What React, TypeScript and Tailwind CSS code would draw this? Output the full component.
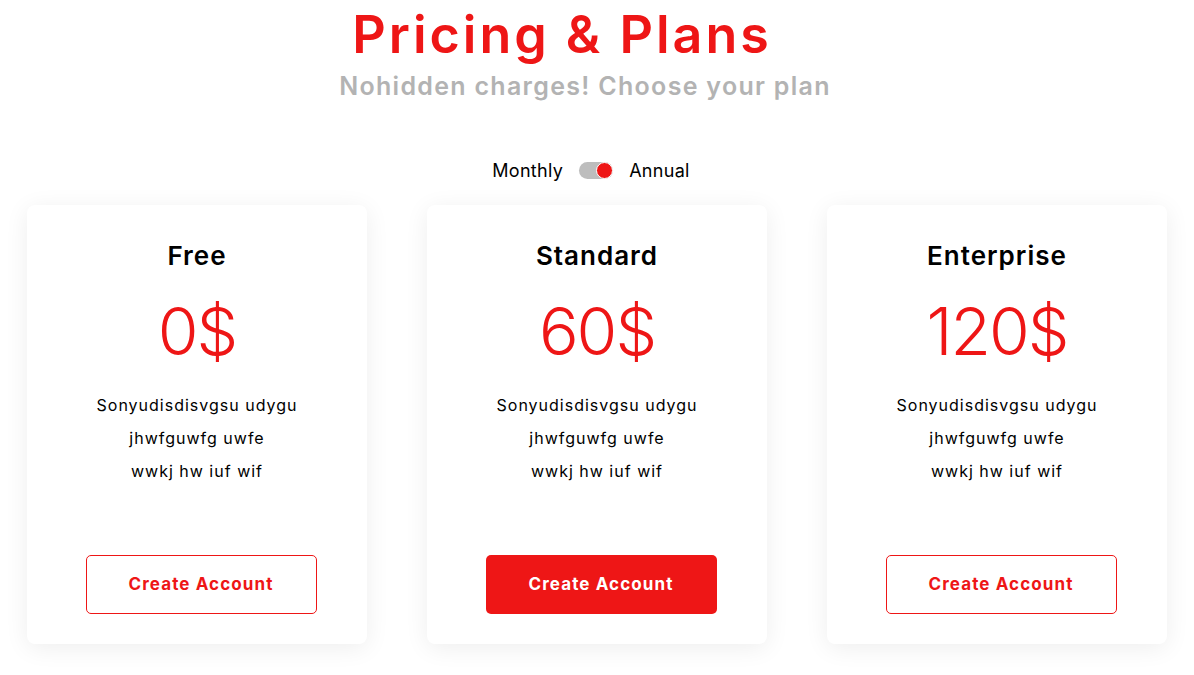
import React from "react";

const plans = [
  { name: "Free", price: "0$", filled: false },
  { name: "Standard", price: "60$", filled: true },
  { name: "Enterprise", price: "120$", filled: false },
];

function Card({ name, price, filled }: { name: string; price: string; filled: boolean }) {
  return (
    <div className="w-[340px] h-[439px] bg-white rounded-[8px] shadow-[0_4px_24px_rgba(0,0,0,0.07)] flex flex-col items-center pt-[35px] pb-[30px]">
      <div className="text-[26px] leading-[32px] font-semibold text-black tracking-[1px]">{name}</div>
      <div className="mt-[19px] text-[66px] leading-[80px] font-light text-[#ee1616] tracking-[-2px]">{price}</div>
      <div className="mt-[18px] flex flex-col items-center text-[16px] leading-[33px] text-black tracking-[1px]">
        <span>Sonyudisdisvgsu udygu</span>
        <span>jhwfguwfg uwfe</span>
        <span>wwkj hw iuf wif</span>
      </div>
      <button
        className={
          filled
            ? "mt-auto ml-[8px] w-[231px] h-[59px] rounded-[5px] bg-[#ee1616] text-white text-[17px] font-bold tracking-[1.1px]"
            : "mt-auto ml-[8px] w-[231px] h-[59px] rounded-[5px] border border-[#ee1616] bg-white text-[#ee1616] text-[17px] font-bold tracking-[1.1px]"
        }
      >
        Create Account
      </button>
    </div>
  );
}

export default function App() {
  return (
    <div className="min-h-[675px] bg-white font-['Inter',sans-serif] flex flex-col items-center">
      <h1 className="pt-[5px] pr-[70px] text-[52px] leading-[60px] font-semibold text-[#ee1616] tracking-[3px]">Pricing &amp; Plans</h1>
      <p className="mt-[6px] pr-[24px] text-[25px] leading-[30px] font-semibold text-[#b3b3b3] tracking-[1.3px]">Nohidden charges! Choose your plan</p>
      <div className="mt-[57px] pr-[12px] h-[24px] flex items-center gap-[16px] text-[18px] text-black tracking-[0.3px]">
        <span>Monthly</span>
        <div className="relative w-[34px] h-[17px] rounded-full bg-[#bdbdbd]">
          <div className="absolute right-0 top-0 w-[17px] h-[17px] rounded-full bg-[#ee1616] border border-white"></div>
        </div>
        <span>Annual</span>
      </div>
      <div className="mt-[23px] flex gap-[60px]">
        {plans.map((p) => (
          <Card key={p.name} {...p} />
        ))}
      </div>
    </div>
  );
}
